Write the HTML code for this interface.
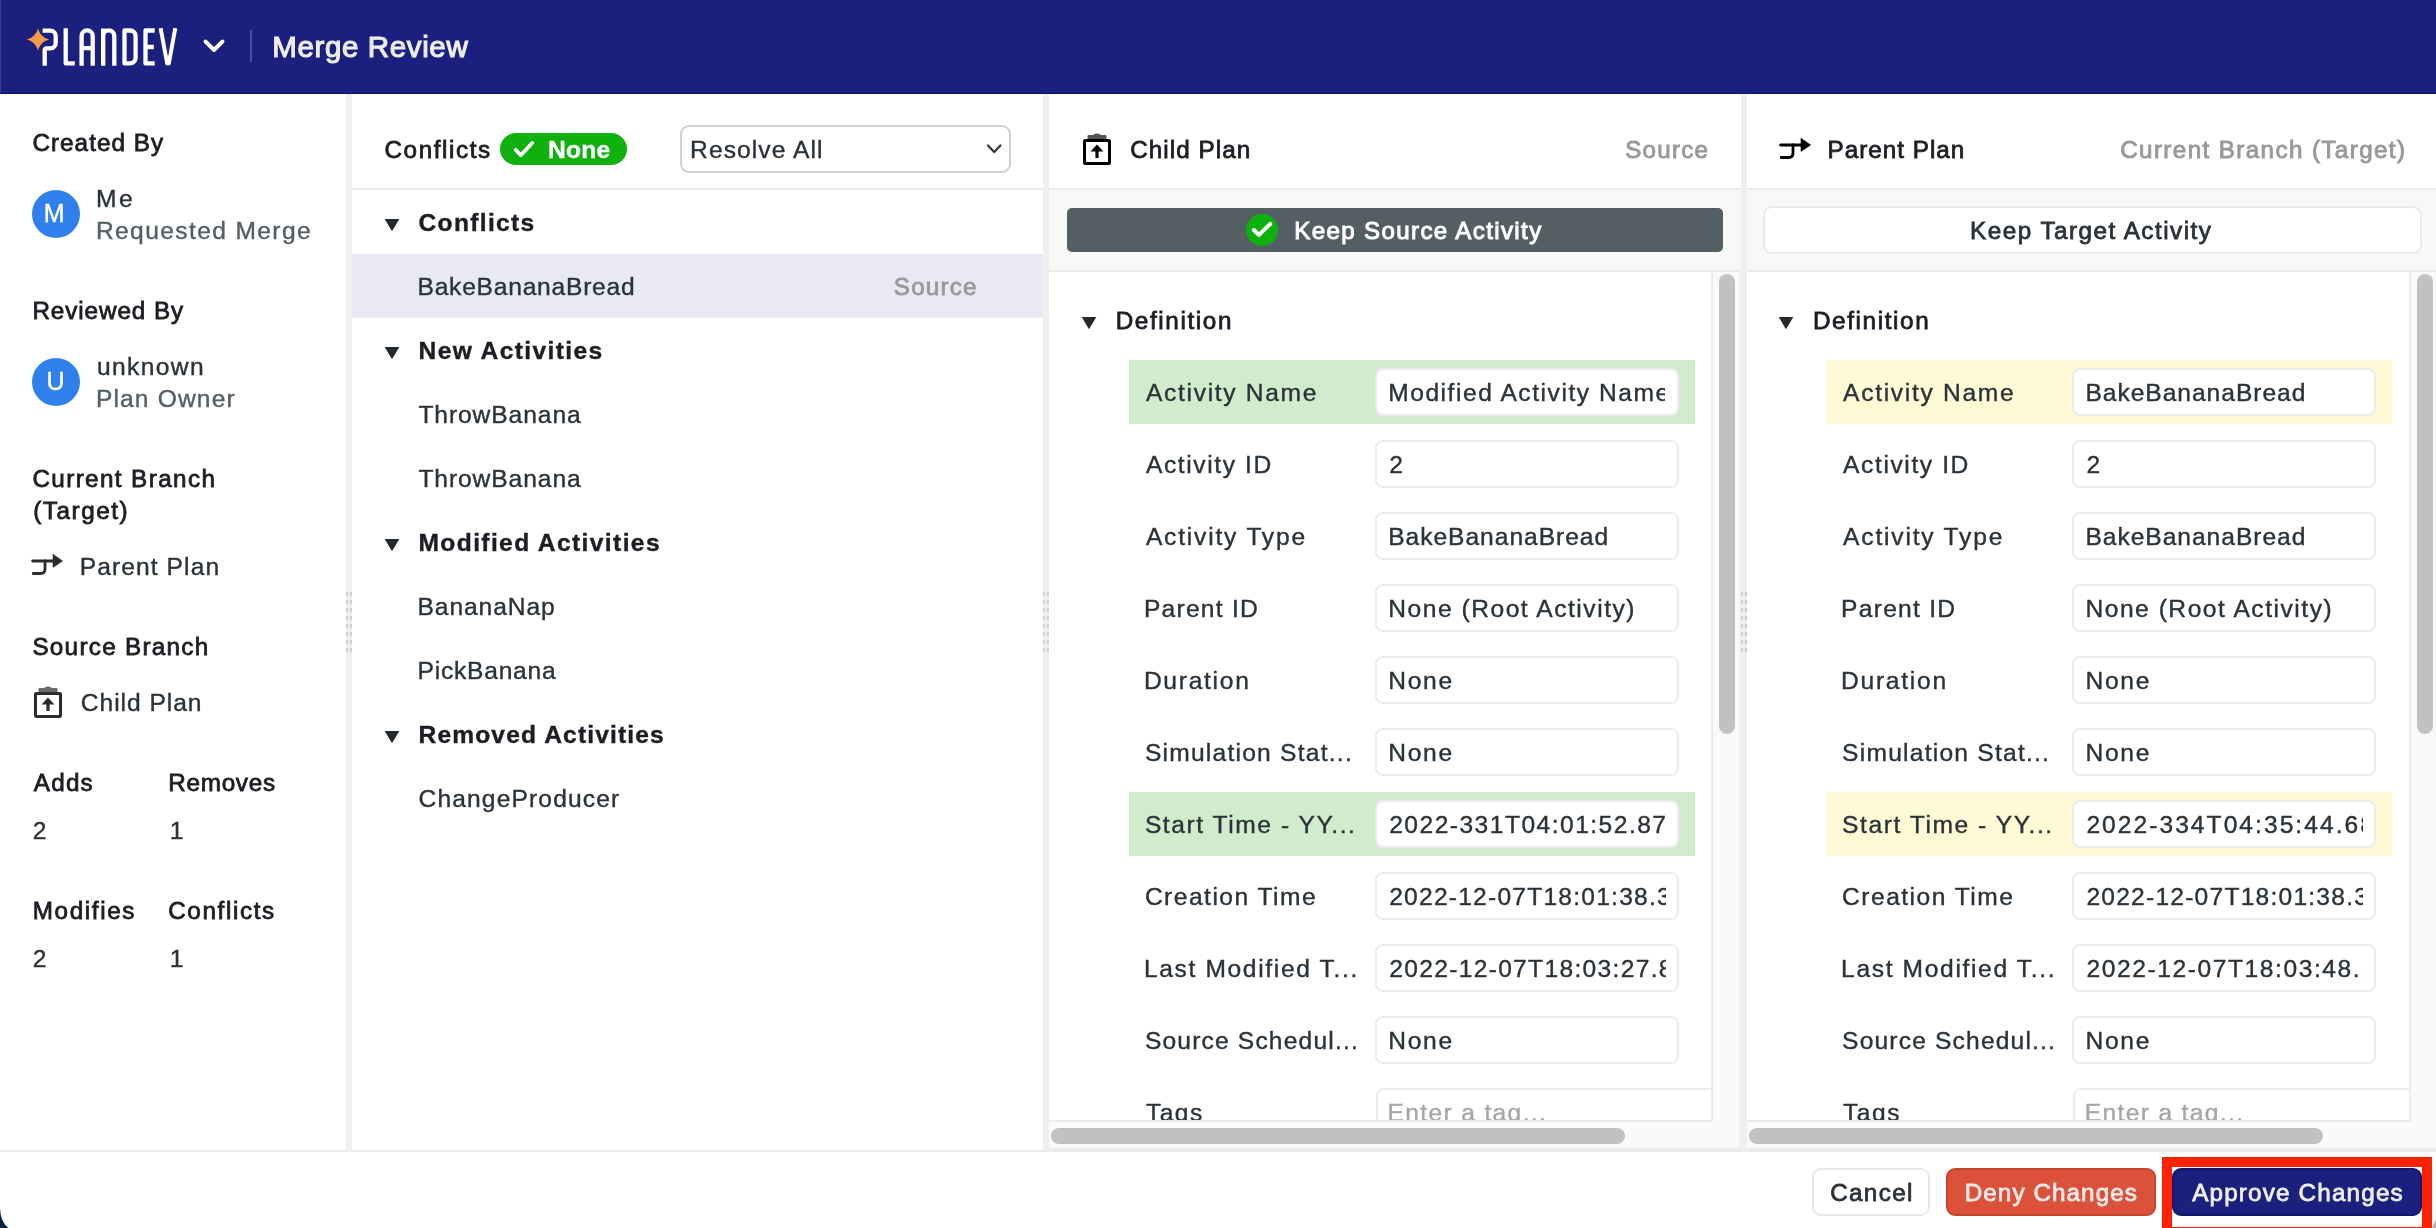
<!DOCTYPE html>
<html><head><meta charset="utf-8"><title>Merge Review</title>
<style>
html,body{margin:0;padding:0;}
body{width:2436px;height:1228px;overflow:hidden;background:#fff;position:relative;font-family:"Liberation Sans",sans-serif;}
div,svg{position:absolute;box-sizing:border-box;}
.t{white-space:nowrap;font-family:"Liberation Sans",sans-serif;}
</style></head><body>
<div id="root" style="left:0;top:0;width:2436px;height:1228px;overflow:hidden;will-change:transform;">
<div style="left:0px;top:0px;width:2436px;height:94px;background:#1b207e;border-bottom:1px solid #0b0f72;"></div>
<div style="left:0px;top:0px;width:1px;height:93px;background:#3b3f92;"></div>
<svg style="left:20px;top:20px" width="170" height="56" viewBox="20 20 170 56">
<path d="M38 28.4 C39.6 34 43.4 37.8 49.2 39.4 C43.4 41 39.6 44.8 38 50.4 C36.4 44.8 32.6 41 26.8 39.4 C32.6 37.8 36.4 34 38 28.4 Z" fill="#f2994a"/>
<g fill="none" stroke="#fff" stroke-width="4.3" stroke-linejoin="round" stroke-linecap="butt">
<path d="M42.6 30.7 H50.4 A5.3 5.3 0 0 1 55.7 36 V43.1 A5.3 5.3 0 0 1 50.4 48.4 H46.6 A2 2 0 0 0 44.7 50.4 V65.7"/>
<path d="M65.7 28.2 V63.4 H74.8"/>
<path d="M81.6 65.7 V36 A5.55 5.55 0 0 1 92.7 36 V65.7 M81.6 48.1 H92.7"/>
<path d="M103.2 65.7 V28.6 M103.2 36 A5.55 5.55 0 0 1 114.3 36 V65.7"/>
<path d="M124.5 30.5 H130 A5.6 5.6 0 0 1 135.6 36.1 V57.8 A5.6 5.6 0 0 1 130 63.4 H124.5 Z"/>
<path d="M154.7 30.5 H145.5 V63.4 H154.7 M145.5 47 H153.8"/>
<path d="M160.6 28.2 L167.2 63.5 H168.8 L175.3 28.2" stroke-width="4"/>
</g></svg>
<svg style="left:200px;top:34px" width="28" height="24" viewBox="200 34 28 24"><path d="M205.5 41.5 L214 50 L222.5 41.5" fill="none" stroke="#fff" stroke-width="3.9" stroke-linecap="round" stroke-linejoin="round"/></svg>
<div style="left:250px;top:30px;width:2px;height:32px;background:#4d5199;"></div>
<div class="t" style="left:272.20px;top:26.80px;height:40px;line-height:40px;font-size:29.5px;font-weight:400;color:#ededed;letter-spacing:0.633px;-webkit-text-stroke:1.15px #ededed;">Merge Review</div>
<div style="left:346px;top:94px;width:6px;height:1056px;background:#efefef;"></div>
<div style="left:346px;top:592px;width:2px;height:4px;background:#cfcfcf;"></div>
<div style="left:350px;top:592px;width:2px;height:4px;background:#cfcfcf;"></div>
<div style="left:346px;top:600px;width:2px;height:4px;background:#cfcfcf;"></div>
<div style="left:350px;top:600px;width:2px;height:4px;background:#cfcfcf;"></div>
<div style="left:346px;top:608px;width:2px;height:4px;background:#cfcfcf;"></div>
<div style="left:350px;top:608px;width:2px;height:4px;background:#cfcfcf;"></div>
<div style="left:346px;top:616px;width:2px;height:4px;background:#cfcfcf;"></div>
<div style="left:350px;top:616px;width:2px;height:4px;background:#cfcfcf;"></div>
<div style="left:346px;top:624px;width:2px;height:4px;background:#cfcfcf;"></div>
<div style="left:350px;top:624px;width:2px;height:4px;background:#cfcfcf;"></div>
<div style="left:346px;top:632px;width:2px;height:4px;background:#cfcfcf;"></div>
<div style="left:350px;top:632px;width:2px;height:4px;background:#cfcfcf;"></div>
<div style="left:346px;top:640px;width:2px;height:4px;background:#cfcfcf;"></div>
<div style="left:350px;top:640px;width:2px;height:4px;background:#cfcfcf;"></div>
<div style="left:346px;top:648px;width:2px;height:4px;background:#cfcfcf;"></div>
<div style="left:350px;top:648px;width:2px;height:4px;background:#cfcfcf;"></div>
<div style="left:1043px;top:94px;width:6px;height:1056px;background:#efefef;"></div>
<div style="left:1043px;top:592px;width:2px;height:4px;background:#cfcfcf;"></div>
<div style="left:1047px;top:592px;width:2px;height:4px;background:#cfcfcf;"></div>
<div style="left:1043px;top:600px;width:2px;height:4px;background:#cfcfcf;"></div>
<div style="left:1047px;top:600px;width:2px;height:4px;background:#cfcfcf;"></div>
<div style="left:1043px;top:608px;width:2px;height:4px;background:#cfcfcf;"></div>
<div style="left:1047px;top:608px;width:2px;height:4px;background:#cfcfcf;"></div>
<div style="left:1043px;top:616px;width:2px;height:4px;background:#cfcfcf;"></div>
<div style="left:1047px;top:616px;width:2px;height:4px;background:#cfcfcf;"></div>
<div style="left:1043px;top:624px;width:2px;height:4px;background:#cfcfcf;"></div>
<div style="left:1047px;top:624px;width:2px;height:4px;background:#cfcfcf;"></div>
<div style="left:1043px;top:632px;width:2px;height:4px;background:#cfcfcf;"></div>
<div style="left:1047px;top:632px;width:2px;height:4px;background:#cfcfcf;"></div>
<div style="left:1043px;top:640px;width:2px;height:4px;background:#cfcfcf;"></div>
<div style="left:1047px;top:640px;width:2px;height:4px;background:#cfcfcf;"></div>
<div style="left:1043px;top:648px;width:2px;height:4px;background:#cfcfcf;"></div>
<div style="left:1047px;top:648px;width:2px;height:4px;background:#cfcfcf;"></div>
<div style="left:1741px;top:94px;width:6px;height:1056px;background:#efefef;"></div>
<div style="left:1741px;top:592px;width:2px;height:4px;background:#cfcfcf;"></div>
<div style="left:1745px;top:592px;width:2px;height:4px;background:#cfcfcf;"></div>
<div style="left:1741px;top:600px;width:2px;height:4px;background:#cfcfcf;"></div>
<div style="left:1745px;top:600px;width:2px;height:4px;background:#cfcfcf;"></div>
<div style="left:1741px;top:608px;width:2px;height:4px;background:#cfcfcf;"></div>
<div style="left:1745px;top:608px;width:2px;height:4px;background:#cfcfcf;"></div>
<div style="left:1741px;top:616px;width:2px;height:4px;background:#cfcfcf;"></div>
<div style="left:1745px;top:616px;width:2px;height:4px;background:#cfcfcf;"></div>
<div style="left:1741px;top:624px;width:2px;height:4px;background:#cfcfcf;"></div>
<div style="left:1745px;top:624px;width:2px;height:4px;background:#cfcfcf;"></div>
<div style="left:1741px;top:632px;width:2px;height:4px;background:#cfcfcf;"></div>
<div style="left:1745px;top:632px;width:2px;height:4px;background:#cfcfcf;"></div>
<div style="left:1741px;top:640px;width:2px;height:4px;background:#cfcfcf;"></div>
<div style="left:1745px;top:640px;width:2px;height:4px;background:#cfcfcf;"></div>
<div style="left:1741px;top:648px;width:2px;height:4px;background:#cfcfcf;"></div>
<div style="left:1745px;top:648px;width:2px;height:4px;background:#cfcfcf;"></div>
<div class="t" style="left:32.40px;top:122.50px;height:40px;line-height:40px;font-size:24.26px;font-weight:400;color:#1b1f23;letter-spacing:1.046px;-webkit-text-stroke:0.8px #1b1f23;">Created By</div>
<div style="left:32px;top:190px;width:48px;height:48px;background:#2f80ed;border-radius:50%;"></div>
<div class="t" style="left:43.80px;top:193.40px;height:40px;line-height:40px;font-size:25px;font-weight:400;color:#fff;letter-spacing:0.000px;-webkit-text-stroke:0.4px #fff;">M</div>
<div class="t" style="left:95.90px;top:178.80px;height:40px;line-height:40px;font-size:24.58px;font-weight:400;color:#2c3338;letter-spacing:2.626px;-webkit-text-stroke:0.4px #2c3338;">Me</div>
<div class="t" style="left:95.90px;top:210.50px;height:40px;line-height:40px;font-size:24.58px;font-weight:400;color:#545f64;letter-spacing:1.385px;-webkit-text-stroke:0.4px #545f64;">Requested Merge</div>
<div class="t" style="left:32.40px;top:290.50px;height:40px;line-height:40px;font-size:24.26px;font-weight:400;color:#1b1f23;letter-spacing:0.920px;-webkit-text-stroke:0.8px #1b1f23;">Reviewed By</div>
<div style="left:32px;top:358px;width:48px;height:48px;background:#2f80ed;border-radius:50%;"></div>
<div class="t" style="left:46.60px;top:361.40px;height:40px;line-height:40px;font-size:25px;font-weight:400;color:#fff;letter-spacing:0.000px;-webkit-text-stroke:0.4px #fff;">U</div>
<div class="t" style="left:96.90px;top:346.50px;height:40px;line-height:40px;font-size:24.58px;font-weight:400;color:#2c3338;letter-spacing:1.397px;-webkit-text-stroke:0.4px #2c3338;">unknown</div>
<div class="t" style="left:95.90px;top:378.50px;height:40px;line-height:40px;font-size:24.58px;font-weight:400;color:#545f64;letter-spacing:1.153px;-webkit-text-stroke:0.4px #545f64;">Plan Owner</div>
<div class="t" style="left:32.40px;top:458.50px;height:40px;line-height:40px;font-size:24.26px;font-weight:400;color:#1b1f23;letter-spacing:1.389px;-webkit-text-stroke:0.8px #1b1f23;">Current Branch</div>
<div class="t" style="left:33.20px;top:490.50px;height:40px;line-height:40px;font-size:24.26px;font-weight:400;color:#1b1f23;letter-spacing:1.561px;-webkit-text-stroke:0.8px #1b1f23;">(Target)</div>
<svg style="left:31px;top:553px" width="34" height="26" viewBox="0 0 34 26"><g fill="none" stroke="#2b2b2b" stroke-width="2.8" stroke-linecap="round" stroke-linejoin="round"><path d="M1.6 8 H23"/><path d="M2.2 20.5 H9.5 Q14 20.5 14 16 V8"/></g><path d="M22 1.2 L31.6 8 L22 14.4 Z" fill="#2b2b2b" stroke="#2b2b2b" stroke-width="0.6" stroke-linejoin="round"/></svg>
<div class="t" style="left:79.80px;top:546.50px;height:40px;line-height:40px;font-size:24.58px;font-weight:400;color:#2c3338;letter-spacing:1.083px;-webkit-text-stroke:0.4px #2c3338;">Parent Plan</div>
<div class="t" style="left:32.40px;top:626.50px;height:40px;line-height:40px;font-size:24.26px;font-weight:400;color:#1b1f23;letter-spacing:1.282px;-webkit-text-stroke:0.8px #1b1f23;">Source Branch</div>
<svg style="left:32px;top:684px" width="32" height="36" viewBox="0 0 32 36"><path d="M6.5 8.5 V5.2 Q6.5 4 7.7 4 H12 Q16 1.2 20 4 H24.3 Q25.5 4 25.5 5.2 V8.5 Z" fill="#6a6a6a"/><rect x="3.5" y="9.5" width="25" height="23" rx="0.8" fill="none" stroke="#2b2b2b" stroke-width="3"/><path d="M16 27 V18" stroke="#2b2b2b" stroke-width="3.2" fill="none"/><path d="M9.6 20.6 L16 13.6 L22.4 20.6 Z" fill="#2b2b2b"/></svg>
<div class="t" style="left:80.80px;top:682.50px;height:40px;line-height:40px;font-size:24.58px;font-weight:400;color:#2c3338;letter-spacing:0.960px;-webkit-text-stroke:0.4px #2c3338;">Child Plan</div>
<div class="t" style="left:33.80px;top:762.50px;height:40px;line-height:40px;font-size:24.26px;font-weight:400;color:#1b1f23;letter-spacing:1.217px;-webkit-text-stroke:0.8px #1b1f23;">Adds</div>
<div class="t" style="left:168.20px;top:762.50px;height:40px;line-height:40px;font-size:24.26px;font-weight:400;color:#1b1f23;letter-spacing:0.750px;-webkit-text-stroke:0.8px #1b1f23;">Removes</div>
<div class="t" style="left:32.80px;top:810.50px;height:40px;line-height:40px;font-size:24.58px;font-weight:400;color:#2c3338;letter-spacing:0.000px;-webkit-text-stroke:0.4px #2c3338;">2</div>
<div class="t" style="left:169.70px;top:810.50px;height:40px;line-height:40px;font-size:24.58px;font-weight:400;color:#2c3338;letter-spacing:0.000px;-webkit-text-stroke:0.4px #2c3338;">1</div>
<div class="t" style="left:32.80px;top:890.50px;height:40px;line-height:40px;font-size:24.26px;font-weight:400;color:#1b1f23;letter-spacing:1.618px;-webkit-text-stroke:0.8px #1b1f23;">Modifies</div>
<div class="t" style="left:168.20px;top:890.50px;height:40px;line-height:40px;font-size:24.26px;font-weight:400;color:#1b1f23;letter-spacing:1.617px;-webkit-text-stroke:0.8px #1b1f23;">Conflicts</div>
<div class="t" style="left:32.80px;top:938.50px;height:40px;line-height:40px;font-size:24.58px;font-weight:400;color:#2c3338;letter-spacing:0.000px;-webkit-text-stroke:0.4px #2c3338;">2</div>
<div class="t" style="left:169.70px;top:938.50px;height:40px;line-height:40px;font-size:24.58px;font-weight:400;color:#2c3338;letter-spacing:0.000px;-webkit-text-stroke:0.4px #2c3338;">1</div>
<div style="left:352px;top:188px;width:691px;height:2px;background:#ebebeb;"></div>
<div class="t" style="left:384.50px;top:130.00px;height:40px;line-height:40px;font-size:24.26px;font-weight:400;color:#1b1f23;letter-spacing:1.580px;-webkit-text-stroke:0.8px #1b1f23;">Conflicts</div>
<div style="left:500px;top:133px;width:127px;height:32px;background:#0fb10f;border-radius:16px;"></div>
<svg style="left:510px;top:137px" width="28" height="24" viewBox="510 137 28 24"><path d="M515.6 149.8 L520.8 155.2 L532.2 143" fill="none" stroke="#fff" stroke-width="3.8" stroke-linecap="round" stroke-linejoin="round"/></svg>
<div class="t" style="left:548.00px;top:129.50px;height:40px;line-height:40px;font-size:24.62px;font-weight:700;color:#fff;letter-spacing:0.254px;-webkit-text-stroke:0.35px #fff;">None</div>
<div style="left:680px;top:125px;width:331px;height:48px;background:#fff;border:2px solid #cfcfcf;border-radius:9px;"></div>
<div class="t" style="left:690.10px;top:129.80px;height:40px;line-height:40px;font-size:24.58px;font-weight:400;color:#2c3338;letter-spacing:1.082px;-webkit-text-stroke:0.4px #2c3338;">Resolve All</div>
<svg style="left:984px;top:140px" width="20" height="18" viewBox="984 140 20 18"><path d="M988 145.5 L994.2 152 L1000.4 145.5" fill="none" stroke="#333" stroke-width="2.2" stroke-linecap="round" stroke-linejoin="round"/></svg>
<div style="left:352px;top:254px;width:691px;height:64px;background:#e9e9f5;"></div>
<svg style="left:383px;top:216.5px" width="18" height="16" viewBox="-9 -8 18 16"><path d="M-7.3 -6 H7.3 L0 6.2 Z" fill="#24292d"/></svg>
<div class="t" style="left:418.50px;top:202.70px;height:40px;line-height:40px;font-size:24.58px;font-weight:700;color:#1b1f23;letter-spacing:1.329px;-webkit-text-stroke:0.4px #1b1f23;">Conflicts</div>
<div class="t" style="left:417.50px;top:266.50px;height:40px;line-height:40px;font-size:24.58px;font-weight:400;color:#2c3338;letter-spacing:0.773px;-webkit-text-stroke:0.4px #2c3338;">BakeBananaBread</div>
<div class="t" style="left:893.80px;top:266.50px;height:40px;line-height:40px;font-size:24.26px;font-weight:400;color:#999999;letter-spacing:1.170px;-webkit-text-stroke:0.8px #999999;">Source</div>
<svg style="left:383px;top:344.5px" width="18" height="16" viewBox="-9 -8 18 16"><path d="M-7.3 -6 H7.3 L0 6.2 Z" fill="#24292d"/></svg>
<div class="t" style="left:418.50px;top:330.70px;height:40px;line-height:40px;font-size:24.58px;font-weight:700;color:#1b1f23;letter-spacing:1.386px;-webkit-text-stroke:0.4px #1b1f23;">New Activities</div>
<div class="t" style="left:418.40px;top:394.50px;height:40px;line-height:40px;font-size:24.58px;font-weight:400;color:#2c3338;letter-spacing:0.924px;-webkit-text-stroke:0.4px #2c3338;">ThrowBanana</div>
<div class="t" style="left:418.40px;top:458.50px;height:40px;line-height:40px;font-size:24.58px;font-weight:400;color:#2c3338;letter-spacing:0.924px;-webkit-text-stroke:0.4px #2c3338;">ThrowBanana</div>
<svg style="left:383px;top:536.5px" width="18" height="16" viewBox="-9 -8 18 16"><path d="M-7.3 -6 H7.3 L0 6.2 Z" fill="#24292d"/></svg>
<div class="t" style="left:418.50px;top:522.70px;height:40px;line-height:40px;font-size:24.58px;font-weight:700;color:#1b1f23;letter-spacing:1.380px;-webkit-text-stroke:0.4px #1b1f23;">Modified Activities</div>
<div class="t" style="left:417.50px;top:586.50px;height:40px;line-height:40px;font-size:24.58px;font-weight:400;color:#2c3338;letter-spacing:0.918px;-webkit-text-stroke:0.4px #2c3338;">BananaNap</div>
<div class="t" style="left:417.50px;top:650.50px;height:40px;line-height:40px;font-size:24.58px;font-weight:400;color:#2c3338;letter-spacing:0.778px;-webkit-text-stroke:0.4px #2c3338;">PickBanana</div>
<svg style="left:383px;top:728.5px" width="18" height="16" viewBox="-9 -8 18 16"><path d="M-7.3 -6 H7.3 L0 6.2 Z" fill="#24292d"/></svg>
<div class="t" style="left:418.50px;top:714.70px;height:40px;line-height:40px;font-size:24.58px;font-weight:700;color:#1b1f23;letter-spacing:1.142px;-webkit-text-stroke:0.4px #1b1f23;">Removed Activities</div>
<div class="t" style="left:418.50px;top:778.50px;height:40px;line-height:40px;font-size:24.58px;font-weight:400;color:#2c3338;letter-spacing:1.143px;-webkit-text-stroke:0.4px #2c3338;">ChangeProducer</div>
<svg style="left:1081px;top:131px" width="32" height="36" viewBox="0 0 32 36"><path d="M6.5 8.5 V5.2 Q6.5 4 7.7 4 H12 Q16 1.2 20 4 H24.3 Q25.5 4 25.5 5.2 V8.5 Z" fill="#555"/><rect x="3.5" y="9.5" width="25" height="23" rx="0.8" fill="none" stroke="#000" stroke-width="3"/><path d="M16 27 V18" stroke="#000" stroke-width="3.2" fill="none"/><path d="M9.6 20.6 L16 13.6 L22.4 20.6 Z" fill="#000"/></svg>
<div class="t" style="left:1130.20px;top:130.00px;height:40px;line-height:40px;font-size:24.26px;font-weight:400;color:#1b1f23;letter-spacing:1.050px;-webkit-text-stroke:0.8px #1b1f23;">Child Plan</div>
<div class="t" style="left:1625.20px;top:130.00px;height:40px;line-height:40px;font-size:24.18px;font-weight:400;color:#999999;letter-spacing:1.231px;-webkit-text-stroke:0.9px #999999;">Source</div>
<div style="left:1049px;top:188px;width:692px;height:2px;background:#ebebeb;"></div>
<div style="left:1049px;top:190px;width:692px;height:80px;background:#f8f8f8;"></div>
<div style="left:1049px;top:270px;width:692px;height:2px;background:#ebebeb;"></div>
<div style="left:1711px;top:272px;width:2px;height:850px;background:#ebebeb;"></div>
<div style="left:1713px;top:272px;width:28px;height:850px;background:#fafafa;"></div>
<div style="left:1719px;top:274px;width:16px;height:460px;background:#c1c1c1;border-radius:8px;"></div>
<div style="left:1049px;top:1120px;width:664px;height:2px;background:#ebebeb;"></div>
<div style="left:1049px;top:1122px;width:692px;height:28px;background:#fafafa;"></div>
<div style="left:1051px;top:1128px;width:574px;height:16px;background:#c1c1c1;border-radius:8px;"></div>
<svg style="left:1080px;top:315px" width="18" height="16" viewBox="-9 -8 18 16"><path d="M-7.3 -6 H7.3 L0 6.2 Z" fill="#24292d"/></svg>
<div class="t" style="left:1115.70px;top:300.80px;height:40px;line-height:40px;font-size:24.26px;font-weight:400;color:#1b1f23;letter-spacing:1.632px;-webkit-text-stroke:0.8px #1b1f23;">Definition</div>
<div style="left:1129px;top:360px;width:566px;height:64px;background:#d0eccd;"></div>
<div class="t" style="left:1145.90px;top:372.50px;height:40px;line-height:40px;font-size:24.58px;font-weight:400;color:#2c3338;letter-spacing:1.695px;-webkit-text-stroke:0.4px #2c3338;">Activity Name</div>
<div style="left:1375px;top:368px;width:303.5px;height:48px;background:#fff;border:2px solid #e9ebec;border-radius:8px;"></div>
<div class="t" style="left:1388.20px;top:372.50px;height:40px;line-height:40px;font-size:24.58px;font-weight:400;color:#2c3338;letter-spacing:1.540px;-webkit-text-stroke:0.4px #2c3338;width:276.5px;overflow:hidden;">Modified Activity Name</div>
<div class="t" style="left:1145.90px;top:444.50px;height:40px;line-height:40px;font-size:24.58px;font-weight:400;color:#2c3338;letter-spacing:1.600px;-webkit-text-stroke:0.4px #2c3338;">Activity ID</div>
<div style="left:1375px;top:440px;width:303.5px;height:48px;background:#fff;border:2px solid #e9ebec;border-radius:8px;"></div>
<div class="t" style="left:1389.20px;top:444.50px;height:40px;line-height:40px;font-size:24.58px;font-weight:400;color:#2c3338;letter-spacing:0.000px;-webkit-text-stroke:0.4px #2c3338;">2</div>
<div class="t" style="left:1145.90px;top:516.50px;height:40px;line-height:40px;font-size:24.58px;font-weight:400;color:#2c3338;letter-spacing:1.810px;-webkit-text-stroke:0.4px #2c3338;">Activity Type</div>
<div style="left:1375px;top:512px;width:303.5px;height:48px;background:#fff;border:2px solid #e9ebec;border-radius:8px;"></div>
<div class="t" style="left:1388.20px;top:516.50px;height:40px;line-height:40px;font-size:24.58px;font-weight:400;color:#2c3338;letter-spacing:0.973px;-webkit-text-stroke:0.4px #2c3338;">BakeBananaBread</div>
<div class="t" style="left:1143.90px;top:588.50px;height:40px;line-height:40px;font-size:24.58px;font-weight:400;color:#2c3338;letter-spacing:1.266px;-webkit-text-stroke:0.4px #2c3338;">Parent ID</div>
<div style="left:1375px;top:584px;width:303.5px;height:48px;background:#fff;border:2px solid #e9ebec;border-radius:8px;"></div>
<div class="t" style="left:1388.20px;top:588.50px;height:40px;line-height:40px;font-size:24.58px;font-weight:400;color:#2c3338;letter-spacing:1.534px;-webkit-text-stroke:0.4px #2c3338;">None (Root Activity)</div>
<div class="t" style="left:1143.90px;top:660.50px;height:40px;line-height:40px;font-size:24.58px;font-weight:400;color:#2c3338;letter-spacing:1.724px;-webkit-text-stroke:0.4px #2c3338;">Duration</div>
<div style="left:1375px;top:656px;width:303.5px;height:48px;background:#fff;border:2px solid #e9ebec;border-radius:8px;"></div>
<div class="t" style="left:1388.20px;top:660.50px;height:40px;line-height:40px;font-size:24.58px;font-weight:400;color:#2c3338;letter-spacing:1.737px;-webkit-text-stroke:0.4px #2c3338;">None</div>
<div class="t" style="left:1144.90px;top:732.50px;height:40px;line-height:40px;font-size:24.58px;font-weight:400;color:#2c3338;letter-spacing:1.238px;-webkit-text-stroke:0.4px #2c3338;">Simulation Stat...</div>
<div style="left:1375px;top:728px;width:303.5px;height:48px;background:#fff;border:2px solid #e9ebec;border-radius:8px;"></div>
<div class="t" style="left:1388.20px;top:732.50px;height:40px;line-height:40px;font-size:24.58px;font-weight:400;color:#2c3338;letter-spacing:1.737px;-webkit-text-stroke:0.4px #2c3338;">None</div>
<div style="left:1129px;top:792px;width:566px;height:64px;background:#d0eccd;"></div>
<div class="t" style="left:1144.90px;top:804.50px;height:40px;line-height:40px;font-size:24.58px;font-weight:400;color:#2c3338;letter-spacing:1.561px;-webkit-text-stroke:0.4px #2c3338;">Start Time - YY...</div>
<div style="left:1375px;top:800px;width:303.5px;height:48px;background:#fff;border:2px solid #e9ebec;border-radius:8px;"></div>
<div class="t" style="left:1389.20px;top:804.50px;height:40px;line-height:40px;font-size:24.58px;font-weight:400;color:#2c3338;letter-spacing:1.480px;-webkit-text-stroke:0.4px #2c3338;width:276.5px;overflow:hidden;">2022-331T04:01:52.877</div>
<div class="t" style="left:1144.90px;top:876.50px;height:40px;line-height:40px;font-size:24.58px;font-weight:400;color:#2c3338;letter-spacing:1.478px;-webkit-text-stroke:0.4px #2c3338;">Creation Time</div>
<div style="left:1375px;top:872px;width:303.5px;height:48px;background:#fff;border:2px solid #e9ebec;border-radius:8px;"></div>
<div class="t" style="left:1389.20px;top:876.50px;height:40px;line-height:40px;font-size:24.58px;font-weight:400;color:#2c3338;letter-spacing:1.230px;-webkit-text-stroke:0.4px #2c3338;width:276.5px;overflow:hidden;">2022-12-07T18:01:38.32</div>
<div class="t" style="left:1143.90px;top:948.50px;height:40px;line-height:40px;font-size:24.58px;font-weight:400;color:#2c3338;letter-spacing:1.649px;-webkit-text-stroke:0.4px #2c3338;">Last Modified T...</div>
<div style="left:1375px;top:944px;width:303.5px;height:48px;background:#fff;border:2px solid #e9ebec;border-radius:8px;"></div>
<div class="t" style="left:1389.20px;top:948.50px;height:40px;line-height:40px;font-size:24.58px;font-weight:400;color:#2c3338;letter-spacing:1.320px;-webkit-text-stroke:0.4px #2c3338;width:276.5px;overflow:hidden;">2022-12-07T18:03:27.80</div>
<div class="t" style="left:1144.90px;top:1020.50px;height:40px;line-height:40px;font-size:24.58px;font-weight:400;color:#2c3338;letter-spacing:1.176px;-webkit-text-stroke:0.4px #2c3338;">Source Schedul...</div>
<div style="left:1375px;top:1016px;width:303.5px;height:48px;background:#fff;border:2px solid #e9ebec;border-radius:8px;"></div>
<div class="t" style="left:1388.20px;top:1020.50px;height:40px;line-height:40px;font-size:24.58px;font-weight:400;color:#2c3338;letter-spacing:1.737px;-webkit-text-stroke:0.4px #2c3338;">None</div>
<div style="left:1049px;top:1080px;width:662px;height:40px;overflow:hidden;">
<div class="t" style="left:96.90px;top:12.50px;height:40px;line-height:40px;font-size:24.58px;font-weight:400;color:#2c3338;letter-spacing:1.491px;-webkit-text-stroke:0.4px #2c3338;">Tags</div>
<div style="left:326.5px;top:8px;width:360px;height:48px;border:2px solid #e9ebec;border-radius:8px;background:#fff;"></div>
<div class="t" style="left:338.50px;top:12.50px;height:40px;line-height:40px;font-size:24.58px;font-weight:400;color:#a6a6a6;letter-spacing:1.354px;-webkit-text-stroke:0.4px #a6a6a6;">Enter a tag...</div>
</div>
<div style="left:1739px;top:272px;width:2px;height:878px;background:#efefef;"></div>
<div style="left:1067px;top:208px;width:656px;height:44px;background:#545f64;border-radius:5px;"></div>
<div style="left:1246px;top:214px;width:32px;height:32px;background:#0fb10f;border-radius:50%;"></div>
<svg style="left:1246px;top:214px" width="32" height="32" viewBox="0 0 32 32"><path d="M7.9 16 L12.9 20.9 L24.3 9.9" fill="none" stroke="#fff" stroke-width="4" stroke-linecap="round" stroke-linejoin="round"/></svg>
<div class="t" style="left:1294.20px;top:210.50px;height:40px;line-height:40px;font-size:24.1px;font-weight:400;color:#fff;letter-spacing:1.371px;-webkit-text-stroke:1.0px #fff;">Keep Source Activity</div>
<svg style="left:1779px;top:136.8px" width="34" height="26" viewBox="0 0 34 26"><g fill="none" stroke="#000" stroke-width="2.8" stroke-linecap="round" stroke-linejoin="round"><path d="M1.6 8 H23"/><path d="M2.2 20.5 H9.5 Q14 20.5 14 16 V8"/></g><path d="M22 1.2 L31.6 8 L22 14.4 Z" fill="#000" stroke="#000" stroke-width="0.6" stroke-linejoin="round"/></svg>
<div class="t" style="left:1827.60px;top:130.00px;height:40px;line-height:40px;font-size:24.26px;font-weight:400;color:#1b1f23;letter-spacing:0.997px;-webkit-text-stroke:0.8px #1b1f23;">Parent Plan</div>
<div class="t" style="left:2120.20px;top:130.00px;height:40px;line-height:40px;font-size:24.18px;font-weight:400;color:#999999;letter-spacing:1.407px;-webkit-text-stroke:0.9px #999999;">Current Branch (Target)</div>
<div style="left:1747px;top:188px;width:689px;height:2px;background:#ebebeb;"></div>
<div style="left:1747px;top:190px;width:689px;height:80px;background:#f8f8f8;"></div>
<div style="left:1747px;top:270px;width:689px;height:2px;background:#ebebeb;"></div>
<div style="left:2409px;top:272px;width:2px;height:850px;background:#ebebeb;"></div>
<div style="left:2411px;top:272px;width:25px;height:850px;background:#fafafa;"></div>
<div style="left:2417px;top:274px;width:16px;height:460px;background:#c1c1c1;border-radius:8px;"></div>
<div style="left:1747px;top:1120px;width:664px;height:2px;background:#ebebeb;"></div>
<div style="left:1747px;top:1122px;width:689px;height:28px;background:#fafafa;"></div>
<div style="left:1749px;top:1128px;width:574px;height:16px;background:#c1c1c1;border-radius:8px;"></div>
<svg style="left:1777.2px;top:315px" width="18" height="16" viewBox="-9 -8 18 16"><path d="M-7.3 -6 H7.3 L0 6.2 Z" fill="#24292d"/></svg>
<div class="t" style="left:1812.90px;top:300.80px;height:40px;line-height:40px;font-size:24.26px;font-weight:400;color:#1b1f23;letter-spacing:1.632px;-webkit-text-stroke:0.8px #1b1f23;">Definition</div>
<div style="left:1826.2px;top:360px;width:566px;height:64px;background:#fffad6;"></div>
<div class="t" style="left:1843.10px;top:372.50px;height:40px;line-height:40px;font-size:24.58px;font-weight:400;color:#2c3338;letter-spacing:1.695px;-webkit-text-stroke:0.4px #2c3338;">Activity Name</div>
<div style="left:2072.2px;top:368px;width:303.5px;height:48px;background:#fff;border:2px solid #e9ebec;border-radius:8px;"></div>
<div class="t" style="left:2085.40px;top:372.50px;height:40px;line-height:40px;font-size:24.58px;font-weight:400;color:#2c3338;letter-spacing:0.973px;-webkit-text-stroke:0.4px #2c3338;">BakeBananaBread</div>
<div class="t" style="left:1843.10px;top:444.50px;height:40px;line-height:40px;font-size:24.58px;font-weight:400;color:#2c3338;letter-spacing:1.600px;-webkit-text-stroke:0.4px #2c3338;">Activity ID</div>
<div style="left:2072.2px;top:440px;width:303.5px;height:48px;background:#fff;border:2px solid #e9ebec;border-radius:8px;"></div>
<div class="t" style="left:2086.40px;top:444.50px;height:40px;line-height:40px;font-size:24.58px;font-weight:400;color:#2c3338;letter-spacing:0.000px;-webkit-text-stroke:0.4px #2c3338;">2</div>
<div class="t" style="left:1843.10px;top:516.50px;height:40px;line-height:40px;font-size:24.58px;font-weight:400;color:#2c3338;letter-spacing:1.810px;-webkit-text-stroke:0.4px #2c3338;">Activity Type</div>
<div style="left:2072.2px;top:512px;width:303.5px;height:48px;background:#fff;border:2px solid #e9ebec;border-radius:8px;"></div>
<div class="t" style="left:2085.40px;top:516.50px;height:40px;line-height:40px;font-size:24.58px;font-weight:400;color:#2c3338;letter-spacing:0.973px;-webkit-text-stroke:0.4px #2c3338;">BakeBananaBread</div>
<div class="t" style="left:1841.10px;top:588.50px;height:40px;line-height:40px;font-size:24.58px;font-weight:400;color:#2c3338;letter-spacing:1.266px;-webkit-text-stroke:0.4px #2c3338;">Parent ID</div>
<div style="left:2072.2px;top:584px;width:303.5px;height:48px;background:#fff;border:2px solid #e9ebec;border-radius:8px;"></div>
<div class="t" style="left:2085.40px;top:588.50px;height:40px;line-height:40px;font-size:24.58px;font-weight:400;color:#2c3338;letter-spacing:1.534px;-webkit-text-stroke:0.4px #2c3338;">None (Root Activity)</div>
<div class="t" style="left:1841.10px;top:660.50px;height:40px;line-height:40px;font-size:24.58px;font-weight:400;color:#2c3338;letter-spacing:1.724px;-webkit-text-stroke:0.4px #2c3338;">Duration</div>
<div style="left:2072.2px;top:656px;width:303.5px;height:48px;background:#fff;border:2px solid #e9ebec;border-radius:8px;"></div>
<div class="t" style="left:2085.40px;top:660.50px;height:40px;line-height:40px;font-size:24.58px;font-weight:400;color:#2c3338;letter-spacing:1.737px;-webkit-text-stroke:0.4px #2c3338;">None</div>
<div class="t" style="left:1842.10px;top:732.50px;height:40px;line-height:40px;font-size:24.58px;font-weight:400;color:#2c3338;letter-spacing:1.238px;-webkit-text-stroke:0.4px #2c3338;">Simulation Stat...</div>
<div style="left:2072.2px;top:728px;width:303.5px;height:48px;background:#fff;border:2px solid #e9ebec;border-radius:8px;"></div>
<div class="t" style="left:2085.40px;top:732.50px;height:40px;line-height:40px;font-size:24.58px;font-weight:400;color:#2c3338;letter-spacing:1.737px;-webkit-text-stroke:0.4px #2c3338;">None</div>
<div style="left:1826.2px;top:792px;width:566px;height:64px;background:#fffad6;"></div>
<div class="t" style="left:1842.10px;top:804.50px;height:40px;line-height:40px;font-size:24.58px;font-weight:400;color:#2c3338;letter-spacing:1.561px;-webkit-text-stroke:0.4px #2c3338;">Start Time - YY...</div>
<div style="left:2072.2px;top:800px;width:303.5px;height:48px;background:#fff;border:2px solid #e9ebec;border-radius:8px;"></div>
<div class="t" style="left:2086.40px;top:804.50px;height:40px;line-height:40px;font-size:24.58px;font-weight:400;color:#2c3338;letter-spacing:2.040px;-webkit-text-stroke:0.4px #2c3338;width:276.5px;overflow:hidden;">2022-334T04:35:44.68</div>
<div class="t" style="left:1842.10px;top:876.50px;height:40px;line-height:40px;font-size:24.58px;font-weight:400;color:#2c3338;letter-spacing:1.478px;-webkit-text-stroke:0.4px #2c3338;">Creation Time</div>
<div style="left:2072.2px;top:872px;width:303.5px;height:48px;background:#fff;border:2px solid #e9ebec;border-radius:8px;"></div>
<div class="t" style="left:2086.40px;top:876.50px;height:40px;line-height:40px;font-size:24.58px;font-weight:400;color:#2c3338;letter-spacing:1.230px;-webkit-text-stroke:0.4px #2c3338;width:276.5px;overflow:hidden;">2022-12-07T18:01:38.32</div>
<div class="t" style="left:1841.10px;top:948.50px;height:40px;line-height:40px;font-size:24.58px;font-weight:400;color:#2c3338;letter-spacing:1.649px;-webkit-text-stroke:0.4px #2c3338;">Last Modified T...</div>
<div style="left:2072.2px;top:944px;width:303.5px;height:48px;background:#fff;border:2px solid #e9ebec;border-radius:8px;"></div>
<div class="t" style="left:2086.40px;top:948.50px;height:40px;line-height:40px;font-size:24.58px;font-weight:400;color:#2c3338;letter-spacing:1.580px;-webkit-text-stroke:0.4px #2c3338;width:276.5px;overflow:hidden;">2022-12-07T18:03:48.1</div>
<div class="t" style="left:1842.10px;top:1020.50px;height:40px;line-height:40px;font-size:24.58px;font-weight:400;color:#2c3338;letter-spacing:1.176px;-webkit-text-stroke:0.4px #2c3338;">Source Schedul...</div>
<div style="left:2072.2px;top:1016px;width:303.5px;height:48px;background:#fff;border:2px solid #e9ebec;border-radius:8px;"></div>
<div class="t" style="left:2085.40px;top:1020.50px;height:40px;line-height:40px;font-size:24.58px;font-weight:400;color:#2c3338;letter-spacing:1.737px;-webkit-text-stroke:0.4px #2c3338;">None</div>
<div style="left:1746.2px;top:1080px;width:662.8px;height:40px;overflow:hidden;">
<div class="t" style="left:96.90px;top:12.50px;height:40px;line-height:40px;font-size:24.58px;font-weight:400;color:#2c3338;letter-spacing:1.491px;-webkit-text-stroke:0.4px #2c3338;">Tags</div>
<div style="left:326.5px;top:8px;width:360px;height:48px;border:2px solid #e9ebec;border-radius:8px;background:#fff;"></div>
<div class="t" style="left:338.50px;top:12.50px;height:40px;line-height:40px;font-size:24.58px;font-weight:400;color:#a6a6a6;letter-spacing:1.354px;-webkit-text-stroke:0.4px #a6a6a6;">Enter a tag...</div>
</div>
<div style="left:1763px;top:206.3px;width:659px;height:47.5px;background:#fff;border:2px solid #e9eaeb;border-radius:9px;"></div>
<div class="t" style="left:1970.00px;top:210.50px;height:40px;line-height:40px;font-size:24.26px;font-weight:400;color:#2c3338;letter-spacing:1.496px;-webkit-text-stroke:0.8px #2c3338;">Keep Target Activity</div>
<div style="left:1049px;top:1148px;width:1387px;height:2px;background:#ececec;"></div>
<div style="left:0px;top:1150px;width:2436px;height:2px;background:#e9ebec;"></div>
<div style="left:0px;top:1152px;width:2436px;height:76px;background:#fff;"></div>
<div style="left:1811.5px;top:1168px;width:118px;height:48px;background:#fff;border:2px solid #e6e7e8;border-radius:9px;"></div>
<div class="t" style="left:1830.20px;top:1172.50px;height:40px;line-height:40px;font-size:24.26px;font-weight:400;color:#2c3338;letter-spacing:1.340px;-webkit-text-stroke:0.8px #2c3338;">Cancel</div>
<div style="left:1946px;top:1168px;width:210px;height:48px;background:#db5139;border:2px solid #c5452f;border-radius:9px;"></div>
<div class="t" style="left:1964.70px;top:1172.50px;height:40px;line-height:40px;font-size:24.26px;font-weight:400;color:#fbe9e6;letter-spacing:1.073px;-webkit-text-stroke:0.8px #fbe9e6;">Deny Changes</div>
<div style="left:2162px;top:1157px;width:270px;height:80px;border:10px solid #ff2200;"></div>
<div style="left:2172px;top:1168px;width:250px;height:48px;background:#1b207e;border:2px solid #14186b;border-radius:9px;"></div>
<div class="t" style="left:2192.20px;top:1172.50px;height:40px;line-height:40px;font-size:24.26px;font-weight:400;color:#eeeef6;letter-spacing:1.171px;-webkit-text-stroke:0.8px #eeeef6;">Approve Changes</div>
<svg style="left:0;top:1208px" width="10" height="20" viewBox="0 0 10 20"><path d="M0 0 Q0.5 14 8.5 20 H0 Z" fill="#06283d"/></svg>
<svg style="left:2430px;top:1216px" width="6" height="12" viewBox="0 0 6 12"><path d="M6 3 L1.8 12 H6 Z" fill="#b4b4b4"/></svg>
</div>
</body></html>
